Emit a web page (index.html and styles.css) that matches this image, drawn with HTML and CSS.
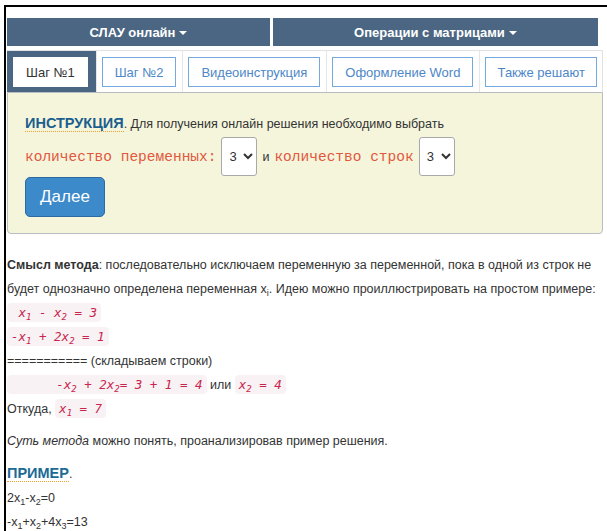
FILE: index.html
```html
<!DOCTYPE html>
<html lang="ru">
<head>
<meta charset="utf-8">
<title>СЛАУ онлайн — метод Гаусса</title>
<link rel="stylesheet" href="styles.css">
</head>
<body>
<div class="frame">
  <div class="page">
    <nav class="menu">
      <div class="menu-item menu-left">СЛАУ онлайн <span class="caret"></span></div>
      <div class="menu-item menu-right">Операции с матрицами <span class="caret"></span></div>
    </nav>

    <div class="tabs">
      <div class="tab tab-active"><button class="tab-btn tab-btn-active">Шаг №1</button></div>
      <div class="tab"><button class="tab-btn">Шаг №2</button></div>
      <div class="tab"><button class="tab-btn">Видеоинструкция</button></div>
      <div class="tab"><button class="tab-btn">Оформление Word</button></div>
      <div class="tab tab-last"><button class="tab-btn">Также решают</button></div>
    </div>

    <div class="panel">
      <div class="panel-line"><span class="label">ИНСТРУКЦИЯ</span>. Для получения онлайн решения необходимо выбрать</div>
      <div class="panel-row">
        <span class="mono">количество переменных:</span>
        <select class="num"><option>3</option><option>2</option><option>4</option></select>
        <span>и</span>
        <span class="mono">количество строк</span>
        <select class="num"><option>3</option><option>2</option><option>4</option></select>
      </div>
      <button class="btn-next">Далее</button>
    </div>

    <div class="article">
      <p class="line first"><b>Смысл метода</b>: последовательно исключаем переменную за переменной, пока в одной из строк не</p>
      <p class="line">будет однозначно определена переменная x<sub>i</sub>. Идею можно проиллюстрировать на простом примере:</p>
      <p class="line"><code>&nbsp;x<sub>1</sub> - x<sub>2</sub> = 3</code></p>
      <p class="line"><code>-x<sub>1</sub> + 2x<sub>2</sub> = 1</code></p>
      <p class="line">=========== (складываем строки)</p>
      <p class="line"><code>&nbsp;&nbsp;&nbsp;&nbsp;&nbsp;&nbsp;-x<sub>2</sub> + 2x<sub>2</sub>= 3 + 1 = 4</code> или <code>x<sub>2</sub> = 4</code></p>
      <p class="line">Откуда, <code>x<sub>1</sub> = 7</code></p>
      <p class="line gap"><i>Суть метода</i> можно понять, проанализировав пример решения.</p>
      <p class="line gap"><span class="label label-sm">ПРИМЕР</span>.</p>
      <p class="line">2x<sub>1</sub>-x<sub>2</sub>=0</p>
      <p class="line">-x<sub>1</sub>+x<sub>2</sub>+4x<sub>3</sub>=13</p>
    </div>
  </div>
</div>
</body>
</html>
```

FILE: styles.css
```css
html, body {
  margin: 0;
  padding: 0;
  background: #fff;
}

body {
  padding: 5px 0 0 4px;
  font-family: "Liberation Sans", Arial, sans-serif;
  font-size: 12.5px;
  color: #333;
  overflow: hidden;
}

.frame {
  border-top: 2px solid #000;
  border-left: 2px solid #000;
  min-height: 600px;
}

.page {
  padding: 11px 0 0 1px;
  width: 596px;
}

/* top menu */
.menu {
  display: flex;
  gap: 3px;
  width: 591px;
  height: 28px;
}

.menu-item {
  background: #4b6683;
  color: #fff;
  font-weight: bold;
  font-size: 13px;
  display: flex;
  align-items: center;
  justify-content: center;
  gap: 4px;
}

.menu-left { width: 263px; }
.menu-right { flex: 1; }

.caret {
  display: inline-block;
  width: 0;
  height: 0;
  border-top: 4px solid #fff;
  border-left: 4px solid transparent;
  border-right: 4px solid transparent;
  margin-top: 1px;
}

/* tabs */
.tabs {
  display: flex;
  margin-top: 4px;
  border-top: 1px solid #e2e2e2;
  border-right: 1px solid #e2e2e2;
}

.tab {
  padding: 6px 6px 5px 5px;
  border-left: 1px solid #e6e6e6;
}

.tab-active {
  background: #4b6683;
  border-left: none;
  padding: 6px 8px 5px 6px;
}

.tab-last { flex: 1; padding-right: 5px; }

.tab-btn {
  height: 30px;
  padding: 0 12px;
  border: 1px solid #74a9dd;
  background: #fff;
  color: #4d87c7;
  font-family: "Liberation Sans", Arial, sans-serif;
  font-size: 13px;
  border-radius: 0;
  display: block;
  white-space: nowrap;
}

.tab-last .tab-btn { width: 100%; padding: 0; }

.tab-btn-active {
  color: #333;
  border-color: #fff;
}

/* instruction panel */
.panel {
  background: #f5f5dc;
  border: 1px solid #b9bcc2;
  border-radius: 0 0 4px 4px;
  padding: 18px 18px 16px 17px;
}

.panel-line {
  height: 24px;
  line-height: 24px;
}

.label {
  color: #1b5f8e;
  font-weight: bold;
  font-size: 14.5px;
  border-bottom: 1px dotted #f0a030;
}

.label-sm {
  color: #1a6a96;
}

.panel-row {
  display: flex;
  align-items: center;
  gap: 5px;
  margin-top: 2px;
  height: 39px;
}

.mono {
  font-family: "Liberation Mono", "Courier New", monospace;
  font-size: 14.5px;
  color: #e2583e;
}

.num {
  width: 36px;
  height: 39px;
  border: 1px solid #a9a9a9;
  border-radius: 3px;
  background: #fff;
  font-family: "Liberation Sans", Arial, sans-serif;
  font-size: 13px;
  color: #333;
  padding: 0 0 0 3px;
}

.btn-next {
  margin-top: 1px;
  height: 40px;
  width: 80px;
  background: #3d8acb;
  border: 1px solid #2b6aa2;
  border-radius: 5px;
  color: #fff;
  font-family: "Liberation Sans", Arial, sans-serif;
  font-size: 17px;
  display: block;
}

/* article text */
.article {
  padding-top: 19px;
}

.line {
  margin: 0;
  line-height: 24px;
  white-space: nowrap;
}

.line.gap {
  margin-top: 8px;
}

sub {
  font-size: 9px;
  vertical-align: -3px;
  line-height: 0;
}

code {
  font-family: "DejaVu Sans Mono", Consolas, monospace;
  font-style: italic;
  font-size: 12.5px;
  color: #c7254e;
  background: #f9f2f4;
  border-radius: 4px;
  padding: 2px 4px;
}

code sub {
  font-size: 9px;
}
```
